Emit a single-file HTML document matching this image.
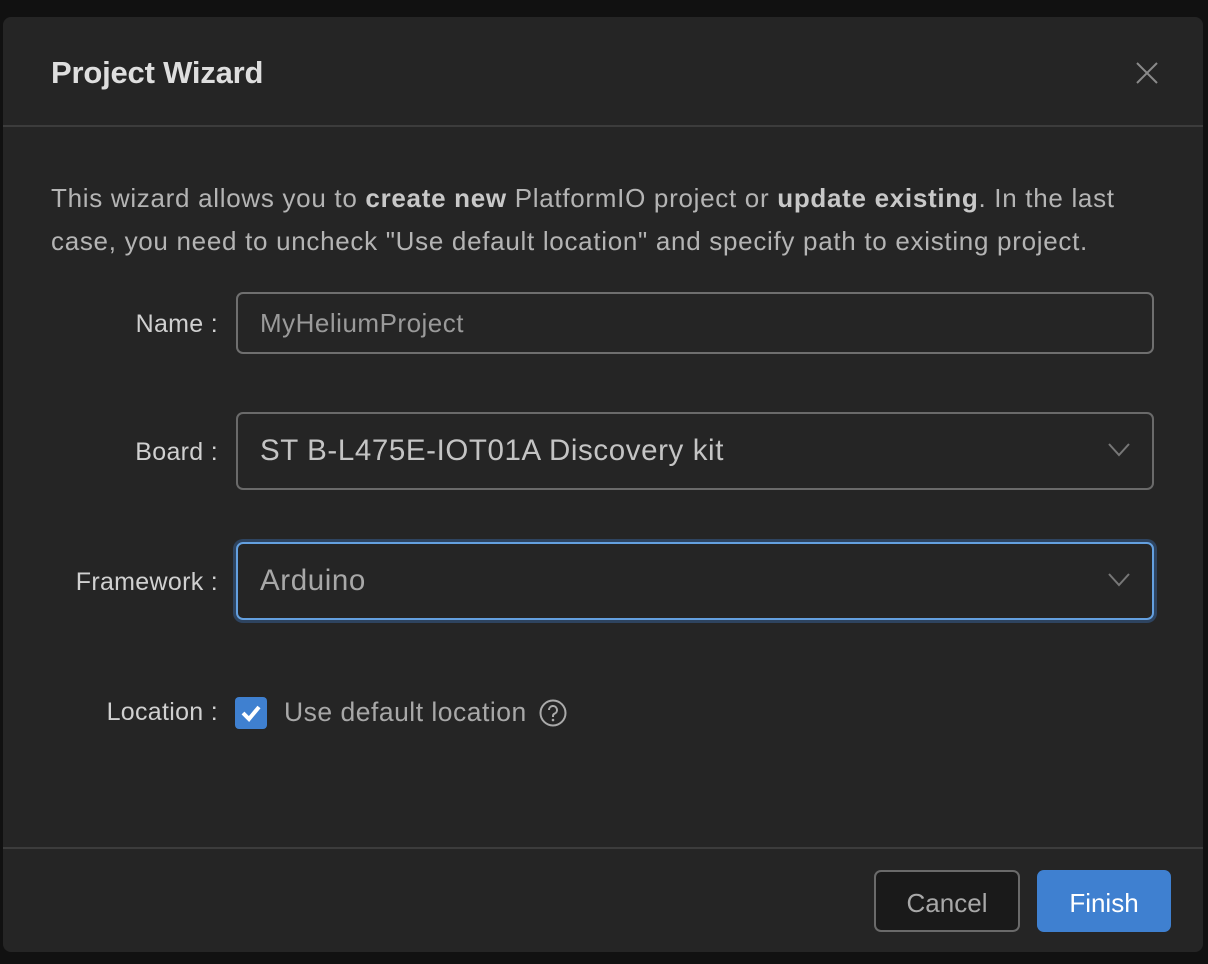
<!DOCTYPE html>
<html><head><style>
*{box-sizing:border-box;margin:0;padding:0}
body{width:1208px;height:964px;background:#111;position:relative;overflow:hidden;font-family:"Liberation Sans","DejaVu Sans",sans-serif;color:#cfcfcf}
.dlg{position:absolute;left:3px;top:17px;width:1200px;height:935px;background:#252525;border-radius:8px}
.t{position:absolute;left:48px;top:38px;font-size:31px;font-weight:bold;color:#dedede;letter-spacing:-0.2px}
.x{position:absolute;left:1132px;top:44px}
.hr{position:absolute;left:0;width:1200px;height:2px;background:#3c3c3c}
.p{position:absolute;left:48px;top:160px;width:1090px;font-size:26px;line-height:43px;color:#b4b4b4;letter-spacing:0.7px}
.p b{color:#c8c8c8}
.lbl{position:absolute;right:985px;font-size:25px;color:#d0d0d0;letter-spacing:0.3px}
.in{position:absolute;left:233px;width:918px;border:2px solid #6a6a6a;border-radius:7px;color:#9a9a9a;padding-left:22px;display:flex;align-items:center}
.chev{position:absolute;right:22px;top:50%;margin-top:-8px}
.btn{position:absolute;top:853px;height:62px;border-radius:7px;font-size:26px;display:flex;align-items:center;justify-content:center;padding-top:4px}
</style></head><body>
<div class="dlg">
<div class="t">Project Wizard</div>
<svg class="x" width="24" height="24" viewBox="0 0 24 24"><path d="M2 2L22 22M22 2L2 22" stroke="#8a8a8a" stroke-width="2"/></svg>
<div class="hr" style="top:108px"></div>
<div class="p">This wizard allows you to <b>create new</b> PlatformIO project or <b>update existing</b>. In the last case, you need to uncheck "Use default location" and specify path to existing project.</div>
<div class="lbl" style="top:293px">Name :</div>
<div class="in" style="top:275px;height:62px;font-size:26px;letter-spacing:0.5px;border-color:#6f6f6f">MyHeliumProject</div>
<div class="lbl" style="top:421px">Board :</div>
<div class="in" style="top:395px;height:78px;font-size:29.5px;letter-spacing:0.6px;color:#c4c4c4">ST B-L475E-IOT01A Discovery kit<svg class="chev" width="22" height="14" viewBox="0 0 22 14"><path d="M1 1L11 12L21 1" stroke="#777" stroke-width="2" fill="none"/></svg></div>
<div class="lbl" style="top:551px">Framework :</div>
<div class="in" style="top:525px;height:78px;font-size:29.5px;letter-spacing:0.6px;color:#a8a8a8;border-color:#64a0e0;box-shadow:0 0 0 3px #2e4460">Arduino<svg class="chev" width="22" height="14" viewBox="0 0 22 14"><path d="M1 1L11 12L21 1" stroke="#777" stroke-width="2" fill="none"/></svg></div>
<div class="lbl" style="top:681px">Location :</div>
<div style="position:absolute;left:232px;top:680px;width:32px;height:32px;background:#3f80d0;border-radius:4px"><svg width="32" height="32" viewBox="0 0 32 32"><path d="M8 16L14 22L24 10" stroke="#fff" stroke-width="4" fill="none"/></svg></div>
<div style="position:absolute;left:281px;top:680px;font-size:26.5px;letter-spacing:0.5px;color:#a8a8a8">Use default location</div>
<svg style="position:absolute;left:535px;top:681px" width="30" height="30" viewBox="0 0 30 30"><circle cx="15" cy="15" r="12.5" stroke="#aaa" stroke-width="2" fill="none"/><path d="M11 12a4 4 0 1 1 5.5 3.7c-1 .4-1.5 1-1.5 2.3v1" stroke="#aaa" stroke-width="2" fill="none"/><circle cx="15" cy="22" r="1.3" fill="#aaa"/></svg>
<div class="hr" style="top:830px"></div>
<div class="btn" style="left:871px;width:146px;background:#1a1a1a;border:2px solid #6a6a6a;color:#a8a8a8">Cancel</div>
<div class="btn" style="left:1034px;width:134px;background:#3f80d0;color:#fff">Finish</div>
</div>
</body></html>
